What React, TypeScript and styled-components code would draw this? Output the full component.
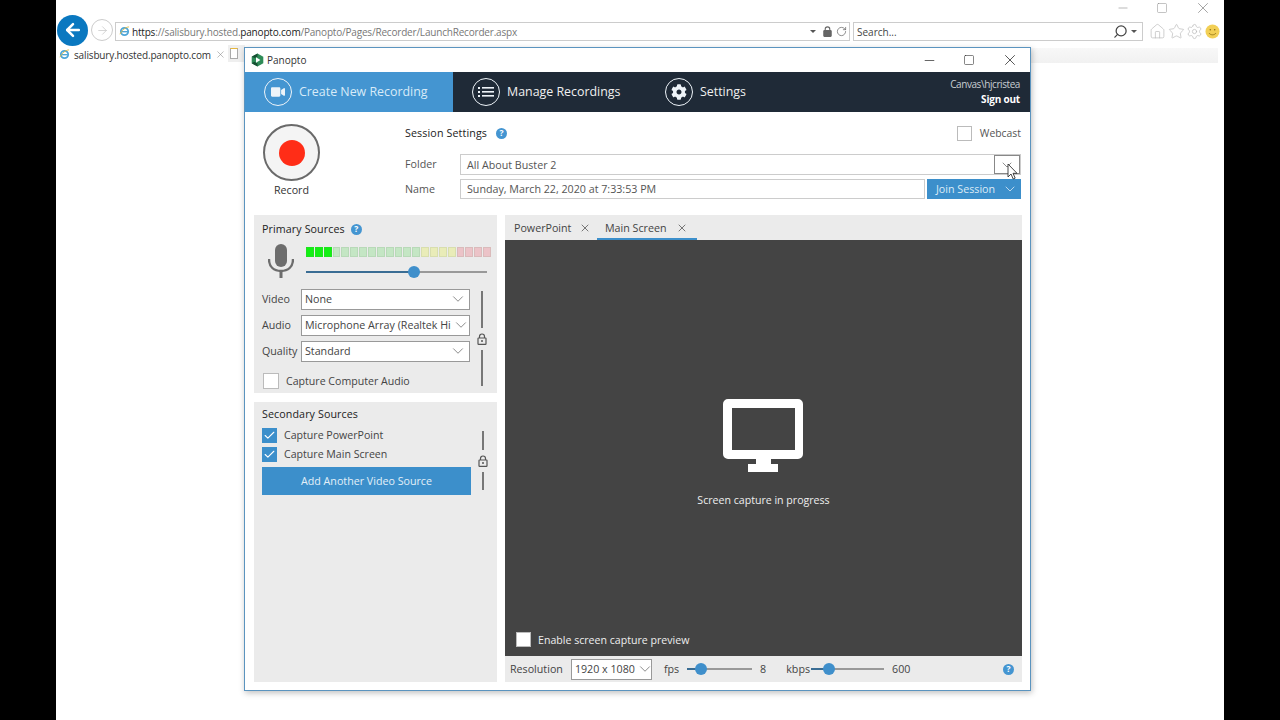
import React from "react";
import styled, { createGlobalStyle } from "styled-components";
import { FaCog, FaVideo } from "react-icons/fa";
import { Home, Star, Settings as GearLine, Search, RotateCw, ChevronDown, X, Check, ArrowLeft, ArrowRight, Minus, Square } from "lucide-react";

const Global = createGlobalStyle`
  html, body { margin: 0; padding: 0; background: #000; }
  * { box-sizing: border-box; }
  body { font-family: "Open Sans", "Noto Sans", sans-serif; font-size: 10.7px; color: #444; }
`;

const Stage = styled.div`
  width: 1280px; height: 720px; background: #000; padding: 0 56px; overflow: hidden;
`;
const Screen = styled.div`
  position: relative; width: 1168px; height: 720px; background: #fff;
  display: flex; flex-direction: column;
`;
const TopControls = styled.div`
  height: 15px; display: flex; justify-content: flex-end; align-items: center; gap: 26px; padding-right: 12px; color: #888;
`;
const AddressRow = styled.div`
  height: 30px; display: flex; align-items: center;
`;
const BackButton = styled.div`
  width: 31px; height: 31px; border-radius: 50%; background: #0a78c0; color: #fff;
  display: flex; align-items: center; justify-content: center; margin: 0 0 0 1px; flex: none;
`;
const ForwardButton = styled.div`
  width: 22px; height: 22px; border-radius: 50%; border: 1px solid #ccc; color: #c4c4c4;
  display: flex; align-items: center; justify-content: center; margin-left: 3px; flex: none;
`;
const AddressBar = styled.div`
  width: 735px; height: 19px; margin: 3px 0 0 2px; border: 1px solid #ccc; display: flex; align-items: center;
  padding: 0 2px 0 3px; flex: none; color: #777; font-size: 10px; letter-spacing: -0.19px; white-space: nowrap;
`;
const UrlText = styled.span`margin-left: 2px;`;
const Dark = styled.span`color: #222;`;
const AddressEnd = styled.div`
  margin-left: auto; display: flex; align-items: center; gap: 3px; color: #666;
`;
const Caret = styled.span`
  width: 0; height: 0; border-left: 3px solid transparent; border-right: 3px solid transparent; border-top: 3px solid #555;
  margin-right: 3px; display: block;
`;
const SearchBar = styled(AddressBar)`
  width: 290px; margin-left: 3px; color: #444; padding-left: 3px; letter-spacing: 0;
`;
const Flip = styled.span`
  display: flex; transform: scaleX(-1); color: #444;
`;
const BrowserIcons = styled.div`
  display: flex; align-items: center; gap: 1.5px; margin: 3px 0 0 6px; color: #bbb;
`;
const Smiley = styled.svg`width: 15px; height: 15px; display: block; flex: none;`;
const TabRow = styled.div`
  height: 19px; display: flex; align-items: flex-start;
`;
const BrowserTab = styled.div`
  width: 172px; height: 19px; display: flex; align-items: center; padding-left: 3px; gap: 4px; color: #333;
  font-size: 10px; letter-spacing: -0.15px; white-space: nowrap;
  svg { flex: none; }
`;
const TabX = styled.span`display: flex; color: #888; margin-left: 0;`;
const NewTab = styled.div`
  width: 17px; height: 17px; background: #efefef; display: flex; align-items: center; justify-content: flex-start; padding-left: 2px; flex: none;
`;
const BlankPage = styled.div`
  width: 8px; height: 11px; background: #fff; border: 1px solid #aaa; border-top-color: #e7b73c;
`;
const TabFill = styled.div`
  flex: 1; height: 15px; margin: 3px 6px 0 0; background: linear-gradient(#f8f8f8, #f1f1f1);
`;

/* Floating application window */
const AppWindow = styled.div`
  position: absolute; left: 188px; top: 47px; width: 787px; height: 644px; background: #fff;
  border: 1px solid #5b94bf; box-shadow: 1px 2px 6px rgba(0,0,0,.25);
  display: flex; flex-direction: column;
`;
const TitleBar = styled.div`
  height: 24px; display: flex; align-items: center; padding: 0 11px 0 6px; color: #333; font-size: 10px; gap: 3px; flex: none;
`;
const WinButtons = styled.div`
  margin-left: auto; display: flex; align-items: center; gap: 26px; color: #222;
`;
const NavBar = styled.div`
  height: 40px; background: #1f2a37; display: flex; align-items: stretch; flex: none;
`;
const NavItem = styled.div<{ $active?: boolean; $w: number; $pad: number }>`
  width: ${p => p.$w}px; padding: 0 0 2px ${p => p.$pad}px; display: flex; align-items: center; gap: 7px; flex: none;
  background: ${p => (p.$active ? "#4495d1" : "transparent")};
  color: ${p => (p.$active ? "#d8ebf8" : "#f0f0f0")};
  font-size: 12.4px;
`;
const NavIcon = styled.span`
  width: 28px; height: 28px; border-radius: 50%; border: 1.5px solid currentColor; display: flex; align-items: center; justify-content: center; color: #eef4f9; flex: none; margin-bottom: -2px;
`;
const UserBox = styled.div`
  margin-left: auto; padding: 5px 10px 0 0; text-align: right; color: #c9ced3; font-size: 10px; letter-spacing: -0.42px; line-height: 15px;
`;
const SignOut = styled.div`color: #fff; font-weight: 700; letter-spacing: -0.2px;`;
const Header = styled.div`
  height: 103px; display: flex; padding: 12px 9px 0 18px; flex: none;
`;
const RecordCol = styled.div`
  width: 57px; display: flex; flex-direction: column; align-items: center; color: #333; font-size: 10.7px; flex: none;
`;
const RecordButton = styled.div`
  width: 57px; height: 57px; border-radius: 50%; border: 2px solid #6a6a6a; background: #f4f4f4;
  display: flex; align-items: center; justify-content: center; margin-bottom: 2px;
`;
const RedDot = styled.div`width: 26px; height: 26px; border-radius: 50%; background: #ff2d17;`;
const SettingsCol = styled.div`
  flex: 1; margin-left: 85px; display: flex; flex-direction: column; min-width: 0;
`;
const SettingsTop = styled.div`
  height: 20px; margin-top: -1px; display: flex; align-items: center; margin-bottom: 11px;
`;
const Heading = styled.span`color: #222; font-size: 10.7px; letter-spacing: .12px;`;
const Help = styled.span`
  width: 11px; height: 11px; border-radius: 50%; background: #4495d1; color: #fff; font-size: 8.5px; font-weight: 700;
  display: inline-flex; align-items: center; justify-content: center; flex: none; line-height: 1;
`;
const HeadHelp = styled(Help)`margin-left: 9px;`;
const Webcast = styled.div`
  margin-left: auto; display: flex; align-items: center; gap: 8px; color: #555; font-size: 10.4px;
`;
const Box = styled.span<{ $size?: number; $on?: boolean }>`
  width: ${p => p.$size ?? 15}px; height: ${p => p.$size ?? 15}px; flex: none;
  background: ${p => (p.$on ? "#3c8fcb" : "#fff")};
  border: 1px solid ${p => (p.$on ? "#3c8fcb" : "#bbb")};
  color: #fff; display: flex; align-items: center; justify-content: center;
`;
const FieldRow = styled.div<{ $h: number; $mb: number }>`
  height: ${p => p.$h}px; margin-bottom: ${p => p.$mb}px; display: flex; align-items: center; gap: 2px;
`;
const FieldLabel = styled.span<{ $lift: number }>`width: 53px; flex: none; color: #555; font-size: 10.7px; padding-bottom: ${p => p.$lift}px;`;
const TextInput = styled.div`
  position: relative; flex: 1; height: 100%; border: 1px solid #ccc; background: #fff; padding-left: 6px;
  display: flex; align-items: center; color: #555; font-size: 10.7px; min-width: 0;
`;
const FolderButton = styled.div`
  position: absolute; right: 0; top: 0; width: 26px; height: 100%; border: 1px solid #888; background: #fff;
  display: flex; align-items: center; justify-content: center; color: #555;
`;
const Cursor = styled.svg`
  position: absolute; left: 12px; top: 7px; width: 11px; height: 17px;
`;
const JoinButton = styled.div`
  width: 94px; height: 100%; background: #3c8fcb; color: #dcebf6; display: flex; align-items: center; padding-left: 9px; gap: 7px; font-size: 10.7px; flex: none;
`;
const Lower = styled.div`
  flex: 1; display: flex; gap: 8px; padding: 0 8px 8px 9px; min-height: 0;
`;
const LeftCol = styled.div`
  width: 243px; display: flex; flex-direction: column; gap: 9px; flex: none;
`;
const Panel = styled.div<{ $fill?: boolean }>`
  background: #ebebeb; padding: ${p => (p.$fill ? "5px" : "7px")} 8px 0; ${p => (p.$fill ? "flex: 1;" : "height: 178px;")}
`;
const PanelTitle = styled.div`
  height: 14px; display: flex; align-items: center; gap: 6px; color: #222; font-size: 10.7px; letter-spacing: .1px;
`;
const MicRow = styled.div`
  display: flex; height: 34px; margin-top: 8px; margin-bottom: 11px;
`;
const MicBox = styled.div`width: 44px; padding-left: 6px; flex: none;`;
const MeterCol = styled.div`
  width: 185px; flex: none; padding-top: 3px; display: flex; flex-direction: column; gap: 9px;
`;
const Meter = styled.div`
  height: 10px; display: grid; grid-template-columns: repeat(21, 1fr); gap: 1px;
`;
const Cell = styled.span<{ $c: string }>`
  background: ${p => p.$c}; box-shadow: inset 0 0 0 1px rgba(110, 140, 110, .14);
`;
const SliderWrap = styled.div<{ $w: number }>`
  position: relative; width: ${p => p.$w}px; height: 12px; flex: none;
`;
const Track = styled.div<{ $c: string; $v: number; $fill?: boolean }>`
  position: absolute; top: 5px; height: 2px; background: ${p => p.$c};
  ${p => (p.$fill ? `left: 0; width: ${p.$v}%;` : `left: 0; width: 100%;`)}
`;
const Thumb = styled.div<{ $v: number }>`
  position: absolute; top: 0; left: calc(${p => p.$v}% - 6px); width: 12px; height: 12px; border-radius: 50%; background: #3f8fcb;
`;
const SourceBlock = styled.div`display: flex; gap: 6px;`;
const FieldCol = styled.div<{ $w: number }>`
  width: ${p => p.$w}px; display: flex; flex-direction: column; flex: none;
`;
const SelectRow = styled.div`
  height: 21px; margin-bottom: 5px; display: flex; align-items: center; color: #444; font-size: 10.7px;
`;
const SelectLabel = styled.span`width: 39px; flex: none; padding-bottom: 1px;`;
const Select = styled.div<{ $w?: number }>`
  flex: ${p => (p.$w ? "none" : "1")}; width: ${p => (p.$w ? `${p.$w}px` : "auto")}; height: 21px; background: #fff; border: 1px solid #999; padding: 0 3px 1px;
  display: flex; align-items: center; justify-content: space-between; color: #444; font-size: 10.7px; white-space: nowrap; overflow: hidden; min-width: 0;
`;
const SelectArrow = styled.span`display: flex; color: #666; flex: none; margin: 0 -1px 0 1px;`;
const CheckRow = styled.div<{ $mt: number; $ml?: number }>`
  display: flex; align-items: center; margin-top: ${p => p.$mt}px; margin-left: ${p => p.$ml ?? 0}px; gap: 7px; color: #444; font-size: 10.6px;
`;
const CheckLabel = styled.span`margin-top: -2px;`;
const LockCol = styled.div<{ $pt: number; $pb: number }>`
  width: 12px; padding: ${p => p.$pt}px 0 ${p => p.$pb}px; display: flex; flex-direction: column; align-items: center; gap: 5px; flex: none; color: #555;
`;
const LockLine = styled.div`flex: 1; width: 1.5px; background: #777;`;
const WideButton = styled.div`
  height: 28px; margin-top: 5px; background: #3c8fcb; color: #e3eff8; display: flex; align-items: center; justify-content: center; font-size: 10.7px;
`;
const RightCol = styled.div`
  flex: 1; display: flex; flex-direction: column; min-width: 0;
`;
const SourceTabs = styled.div`
  height: 25px; background: #ebebeb; display: flex; flex: none;
`;
const SourceTab = styled.div<{ $w: number; $end: number; $start: number; $active?: boolean }>`
  width: ${p => p.$w}px; padding: 3px ${p => p.$end}px 0 ${p => p.$start}px; display: flex; align-items: center; justify-content: space-between;
  color: #444; font-size: 10.7px; border-bottom: 2px solid ${p => (p.$active ? "#3c8fcb" : "transparent")};
`;
const Preview = styled.div`
  flex: 1; background: #444; color: #eee; display: flex; flex-direction: column; align-items: center; padding-top: 159px; min-height: 0;
`;
const Monitor = styled.svg`width: 80px; height: 74px; margin-right: 1px; flex: none;`;
const PreviewText = styled.div`margin-top: 20px; font-size: 10.6px; color: #eee; line-height: 14px;`;
const PreviewCheck = styled.div`
  margin-top: auto; margin-bottom: 9px; align-self: flex-start; margin-left: 11px; display: flex; align-items: center; gap: 7px; font-size: 10.6px;
`;
const Footer = styled.div`
  height: 26px; background: #ebebeb; display: flex; align-items: center; padding: 0 8px 0 5px; color: #444; font-size: 10.7px; flex: none;
`;
const FootText = styled.span<{ $ml: number }>`margin-left: ${p => p.$ml}px; white-space: nowrap;`;
const FootSlider = styled.div<{ $ml: number }>`margin-left: ${p => p.$ml}px; display: flex;`;
const FootHelp = styled(Help)`margin-left: auto;`;

const meterColours = [
  ...Array(3).fill("#12f012"),
  ...Array(10).fill("#c4e6c4"),
  ...Array(4).fill("#e9ecb8"),
  ...Array(4).fill("#ecc3c8"),
];

const IeLogo = () => (
  <svg width="11" height="11" viewBox="0 0 12 12">
    <circle cx="6" cy="6" r="4" fill="none" stroke="#4fa6d8" strokeWidth="2" />
    <path d="M2.5 6.2h7" stroke="#4fa6d8" strokeWidth="1.5" />
    <path d="M1 9c2-4 6-8 10-8" fill="none" stroke="#e2b93b" strokeWidth="1" />
  </svg>
);
const PadLock = ({ size = 12, color = "currentColor", solid = false }: { size?: number; color?: string; solid?: boolean }) => (
  <svg width={size} height={size} viewBox="0 0 12 12">
    <path d="M3.5 5V3.500a2.500 2.500 0 0 1 5 0V5" fill="none" stroke={color} strokeWidth="1.2" />
    <rect x="2" y="5" width="8" height="6.300" rx=".6" fill={solid ? color : "none"} stroke={color} strokeWidth="1.2" />
    {!solid && <circle cx="6" cy="8.100" r="1" fill={color} />}
  </svg>
);
const Slider = ({ w, v }: { w: number; v: number }) => (
  <SliderWrap $w={w}>
    <Track $c="#999" $v={100} />
    <Track $c="#3a6d94" $v={v} $fill />
    <Thumb $v={v} />
  </SliderWrap>
);
const Chevron = ({ size = 18, width = 1 }: { size?: number; width?: number }) => <ChevronDown size={size} strokeWidth={width} />;
const Close = () => <X size={12} strokeWidth={1.4} />;
const Checked = () => <Check size={13} strokeWidth={2} />;

export default function App() {
  return (
    <>
      <Global />
      <Stage>
        <Screen>
          <TopControls>
            <Minus size={14} strokeWidth={1} />
            <Square size={12} strokeWidth={1} />
            <X size={18} strokeWidth={1} />
          </TopControls>
          <AddressRow>
            <BackButton><ArrowLeft size={20} strokeWidth={3} /></BackButton>
            <ForwardButton><ArrowRight size={13} strokeWidth={1.3} /></ForwardButton>
            <AddressBar>
              <IeLogo />
              <UrlText><Dark>https</Dark>://salisbury.hosted.<Dark>panopto.com</Dark>/Panopto/Pages/Recorder/LaunchRecorder.aspx</UrlText>
              <AddressEnd>
                <Caret />
                <PadLock size={11} color="#666" solid />
                <RotateCw size={11} strokeWidth={1.6} />
              </AddressEnd>
            </AddressBar>
            <SearchBar>
              Search...
              <AddressEnd>
                <Flip><Search size={15} strokeWidth={2} /></Flip>
                <Caret />
              </AddressEnd>
            </SearchBar>
            <BrowserIcons>
              <Home size={17} strokeWidth={1} />
              <Star size={17} strokeWidth={1} />
              <GearLine size={17} strokeWidth={1} />
              <Smiley viewBox="0 0 15 15">
                <circle cx="7.5" cy="7.5" r="7" fill="#f2cf55" />
                <circle cx="5.3" cy="5.8" r=".8" fill="#8a6d10" />
                <circle cx="9.7" cy="5.8" r=".8" fill="#8a6d10" />
                <path d="M4 9c1.500 2.400 5.500 2.400 7 0" fill="none" stroke="#8a6d10" strokeWidth=".8" />
              </Smiley>
            </BrowserIcons>
          </AddressRow>
          <TabRow>
            <BrowserTab>
              <IeLogo />
              salisbury.hosted.panopto.com
              <TabX><X size={11} strokeWidth={1.2} /></TabX>
            </BrowserTab>
            <NewTab><BlankPage /></NewTab>
            <TabFill />
          </TabRow>

          <AppWindow>
            <TitleBar>
              <svg width="13" height="14" viewBox="0 0 13 14">
                <path d="M6.500 .5 12.300 3.800v6.400L6.500 13.500.7 10.200V3.800z" fill="#2e8b57" />
                <path d="M.7 3.800 6.500 .5v3L3.800 5z" fill="#174f33" />
                <path d="M6.500 13.500.7 10.200l2.600-1.500 3.200 1.800z" fill="#174f33" />
                <path d="M5 4.300 9.400 7 5 9.700z" fill="#fff" />
              </svg>
              Panopto
              <WinButtons>
                <Minus size={15} strokeWidth={1.1} />
                <Square size={12} strokeWidth={1.1} />
                <X size={18} strokeWidth={1} />
              </WinButtons>
            </TitleBar>
            <NavBar>
              <NavItem $active $w={208} $pad={19}>
                <NavIcon><FaVideo size={14} /></NavIcon>
                Create New Recording
              </NavItem>
              <NavItem $w={212} $pad={19}>
                <NavIcon>
                  <svg width="16" height="12" viewBox="0 0 16 12" fill="currentColor">
                    <rect x="0" y="1" width="2" height="2" /><rect x="4" y="1" width="12" height="1.600" />
                    <rect x="0" y="5" width="2" height="2" /><rect x="4" y="5" width="12" height="1.600" />
                    <rect x="0" y="9" width="2" height="2" /><rect x="4" y="9" width="12" height="1.600" />
                  </svg>
                </NavIcon>
                Manage Recordings
              </NavItem>
              <NavItem $w={150} $pad={0}>
                <NavIcon><FaCog size={16} /></NavIcon>
                Settings
              </NavItem>
              <UserBox>
                Canvas\hjcristea
                <SignOut>Sign out</SignOut>
              </UserBox>
            </NavBar>
            <Header>
              <RecordCol>
                <RecordButton><RedDot /></RecordButton>
                Record
              </RecordCol>
              <SettingsCol>
                <SettingsTop>
                  <Heading>Session Settings</Heading>
                  <HeadHelp>?</HeadHelp>
                  <Webcast><Box />Webcast</Webcast>
                </SettingsTop>
                <FieldRow $h={21} $mb={4}>
                  <FieldLabel $lift={2}>Folder</FieldLabel>
                  <TextInput>
                    All About Buster 2
                    <FolderButton>
                      <Chevron size={16} />
                      <Cursor viewBox="0 0 11 17">
                        <path d="M1 1v13l3-3 2.200 5 2-.9L6 10.300h4z" fill="#fff" stroke="#333" strokeWidth=".9" />
                      </Cursor>
                    </FolderButton>
                  </TextInput>
                </FieldRow>
                <FieldRow $h={20} $mb={0}>
                  <FieldLabel $lift={0}>Name</FieldLabel>
                  <TextInput>Sunday, March 22, 2020 at 7:33:53 PM</TextInput>
                  <JoinButton>Join Session <Chevron size={16} width={1.2} /></JoinButton>
                </FieldRow>
              </SettingsCol>
            </Header>
            <Lower>
              <LeftCol>
                <Panel>
                  <PanelTitle>Primary Sources <Help>?</Help></PanelTitle>
                  <MicRow>
                    <MicBox>
                      <svg width="26" height="34" viewBox="0 0 26 34" fill="#6d6d6d">
                        <rect x="7" y="0" width="12" height="23" rx="6" />
                        <path d="M1 15c0 8 5 12 12 12s12-4 12-12" fill="none" stroke="#6d6d6d" strokeWidth="2.4" />
                        <rect x="11.500" y="26" width="3" height="8" />
                      </svg>
                    </MicBox>
                    <MeterCol>
                      <Meter>{meterColours.map((c, i) => <Cell key={i} $c={c} />)}</Meter>
                      <Slider w={181} v={59.7} />
                    </MeterCol>
                  </MicRow>
                  <SourceBlock>
                    <FieldCol $w={208}>
                      <SelectRow><SelectLabel>Video</SelectLabel><Select>None<SelectArrow><Chevron /></SelectArrow></Select></SelectRow>
                      <SelectRow><SelectLabel>Audio</SelectLabel><Select>Microphone Array (Realtek Hi<SelectArrow><Chevron /></SelectArrow></Select></SelectRow>
                      <SelectRow><SelectLabel>Quality</SelectLabel><Select>Standard<SelectArrow><Chevron /></SelectArrow></Select></SelectRow>
                      <CheckRow $mt={6} $ml={1}><Box $size={16} />Capture Computer Audio</CheckRow>
                    </FieldCol>
                    <LockCol $pt={2} $pb={3}>
                      <LockLine /><PadLock /><LockLine />
                    </LockCol>
                  </SourceBlock>
                </Panel>
                <Panel $fill>
                  <PanelTitle>Secondary Sources</PanelTitle>
                  <SourceBlock>
                    <FieldCol $w={209}>
                      <CheckRow $mt={7}><Box $on><Checked /></Box><CheckLabel>Capture PowerPoint</CheckLabel></CheckRow>
                      <CheckRow $mt={4}><Box $on><Checked /></Box><CheckLabel>Capture Main Screen</CheckLabel></CheckRow>
                      <WideButton>Add Another Video Source</WideButton>
                    </FieldCol>
                    <LockCol $pt={10} $pb={5}>
                      <LockLine /><PadLock /><LockLine />
                    </LockCol>
                  </SourceBlock>
                </Panel>
              </LeftCol>
              <RightCol>
                <SourceTabs>
                  <SourceTab $w={92} $start={9} $end={6}>PowerPoint <Close /></SourceTab>
                  <SourceTab $w={100} $start={8} $end={9} $active>Main Screen <Close /></SourceTab>
                </SourceTabs>
                <Preview>
                  <Monitor viewBox="0 0 80 74" fill="#fff">
                    <path fillRule="evenodd" d="M5 0h70a5 5 0 0 1 5 5v50a5 5 0 0 1-5 5H5a5 5 0 0 1-5-5V5a5 5 0 0 1 5-5zM9 9v42h63V9z" />
                    <rect x="33" y="60" width="15" height="6" />
                    <rect x="25" y="65" width="30" height="8" />
                  </Monitor>
                  <PreviewText>Screen capture in progress</PreviewText>
                  <PreviewCheck><Box />Enable screen capture preview</PreviewCheck>
                </Preview>
                <Footer>
                  Resolution
                  <FootText $ml={8}><Select $w={81}>1920 x 1080<SelectArrow><Chevron /></SelectArrow></Select></FootText>
                  <FootText $ml={12}>fps</FootText>
                  <FootSlider $ml={8}><Slider w={65} v={22} /></FootSlider>
                  <FootText $ml={8}>8</FootText>
                  <FootText $ml={20}>kbps</FootText>
                  <FootSlider $ml={1}><Slider w={73} v={25} /></FootSlider>
                  <FootText $ml={8}>600</FootText>
                  <FootHelp>?</FootHelp>
                </Footer>
              </RightCol>
            </Lower>
          </AppWindow>
        </Screen>
      </Stage>
    </>
  );
}
